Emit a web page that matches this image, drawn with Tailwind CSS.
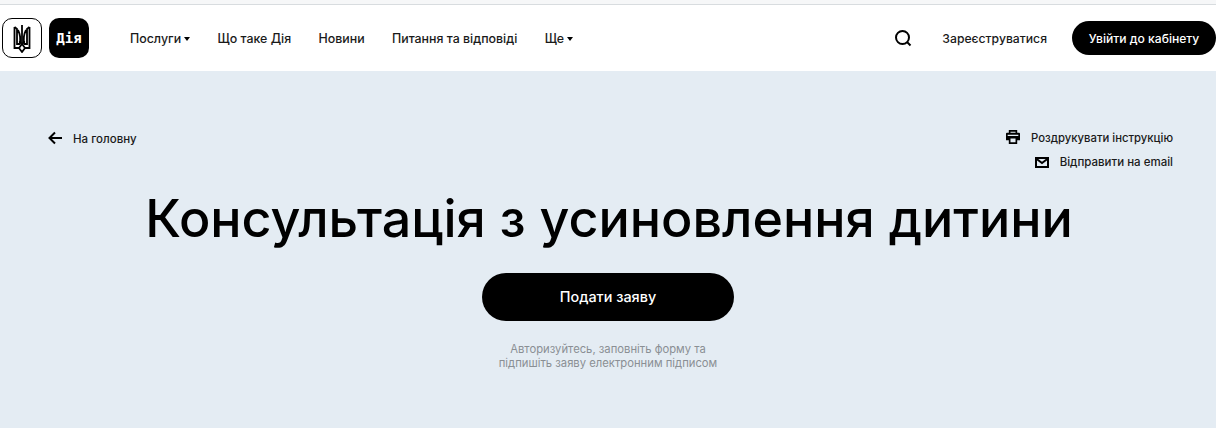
<!DOCTYPE html>
<html lang="uk">
<head>
    <meta charset="UTF-8">
    <meta name="viewport" content="width=device-width, initial-scale=1.0">
    <title>Дія</title>
    <script src="https://cdn.jsdelivr.net/npm/@tailwindcss/browser@4"></script>
</head>
<body class="bg-[#e4ecf3] text-black font-['Inter',sans-serif] h-[428px] overflow-hidden">

    <div class="h-[5px] bg-[#f6f7f8] border-b border-[#d8dcdf]"></div>

    <header class="bg-white h-[66px] flex items-center pl-[2px]">
        <a href="#" class="w-[40px] h-[40px] rounded-[10px] border border-black bg-white flex items-center justify-center">
            <svg width="18" height="29" viewBox="0 0 18 29" fill="none" stroke="black" stroke-width="1.8">
                <path d="M9 1 V19 M9 28 L6 24 L9 20 L12 24 Z"/>
                <path d="M1.5 3 L4 5 V20 H6.5 C8 15 6.5 9 5 6 M16.5 3 L14 5 V20 H11.5 C10 15 11.5 9 13 6"/>
                <path d="M1.5 3 V24 H6 M16.5 3 V24 H12 M6.5 17 L8.5 20 M11.5 17 L9.5 20"/>
            </svg>
        </a>
        <a href="#" class="ml-[7px] w-[40px] h-[40px] rounded-[10px] bg-black text-white flex items-center justify-center font-['DejaVu_Sans_Mono',monospace] text-[14px] font-bold">Дія</a>

        <nav class="ml-[41px] mt-[2px] flex items-center gap-[27.4px] text-[12.4px] font-medium text-[#1a1a1a]">
            <a href="#" class="flex items-center gap-[3px]">Послуги <span class="w-0 h-0 border-x-[3.5px] border-x-transparent border-t-[4px] border-t-black"></span></a>
            <a href="#">Що таке Дія</a>
            <a href="#">Новини</a>
            <a href="#">Питання та відповіді</a>
            <a href="#" class="flex items-center gap-[3px]">Ще <span class="w-0 h-0 border-x-[3.5px] border-x-transparent border-t-[4px] border-t-black"></span></a>
        </nav>

        <div class="ml-auto flex items-center">
            <svg width="18" height="18" viewBox="0 0 18 18" fill="none" stroke="black" stroke-width="2">
                <circle cx="8.5" cy="8.5" r="6.5"/>
                <path d="M13 13 L16.5 16.5"/>
            </svg>
            <a href="#" class="ml-[30px] mt-[2px] text-[12.2px] font-medium text-[#1a1a1a]">Зареєструватися</a>
            <a href="#" class="ml-[25px] w-[144px] h-[34px] pt-[2px] rounded-full bg-black text-white text-[12.1px] font-medium flex items-center justify-center">Увійти до кабінету</a>
        </div>
    </header>

    <main class="px-[43px] pt-[54px]">
        <div class="flex justify-between items-start h-[62px]">
            <a href="#" class="flex items-center gap-[10px] text-[11.5px] font-medium text-[#1a1a1a] mt-[6px]">
                <svg class="-translate-y-[2px]" width="20" height="16" viewBox="0 0 20 16" fill="none" stroke="black" stroke-width="2">
                    <path d="M19 8 H7 M12 2.5 L6.5 8 L12 13.5"/>
                </svg>
                На головну
            </a>
            <div class="flex flex-col items-end gap-[9px] font-medium text-[#1a1a1a] mt-[5px]">
                <a href="#" class="flex items-center gap-[11px] h-[16px] text-[11.3px]">
                    <svg class="-translate-y-[1px]" width="14" height="14" viewBox="0 0 15 15" fill="black">
                        <path d="M3 0 H12 V3 H14 A1 1 0 0 1 15 4 V11 H12 V15 H3 V11 H0 V4 A1 1 0 0 1 1 3 H3 Z M4.8 1.8 V3 H10.2 V1.8 Z M1.8 5 V6.5 H13.2 V5 Z M4.8 9 V13.2 H10.2 V9 Z"/>
                    </svg>
                    Роздрукувати інструкцію
                </a>
                <a href="#" class="flex items-center gap-[11px] h-[16px] text-[11.5px]">
                    <svg class="-translate-y-[1px]" width="14" height="11" viewBox="0 0 14 11" fill="none" stroke="black" stroke-width="2">
                        <rect x="1" y="1" width="12" height="9"/>
                        <path d="M1 1.5 L7 6 L13 1.5"/>
                    </svg>
                    Відправити на email
                </a>
            </div>
        </div>

        <h1 class="text-center text-[52px] leading-[60px] font-medium mt-[2px] pl-[2px] whitespace-nowrap">Консультація з усиновлення дитини</h1>

        <div class="flex flex-col items-center mt-[24px]">
            <a href="#" class="w-[252px] h-[48px] rounded-full bg-black text-white text-[14.4px] font-medium flex items-center justify-center">Подати заяву</a>
            <p class="mt-[21px] text-center text-[11.25px] leading-[14px] text-[#8a8f94]">Авторизуйтесь, заповніть форму та<br>підпишіть заяву електронним підписом</p>
        </div>
    </main>

</body>
</html>
